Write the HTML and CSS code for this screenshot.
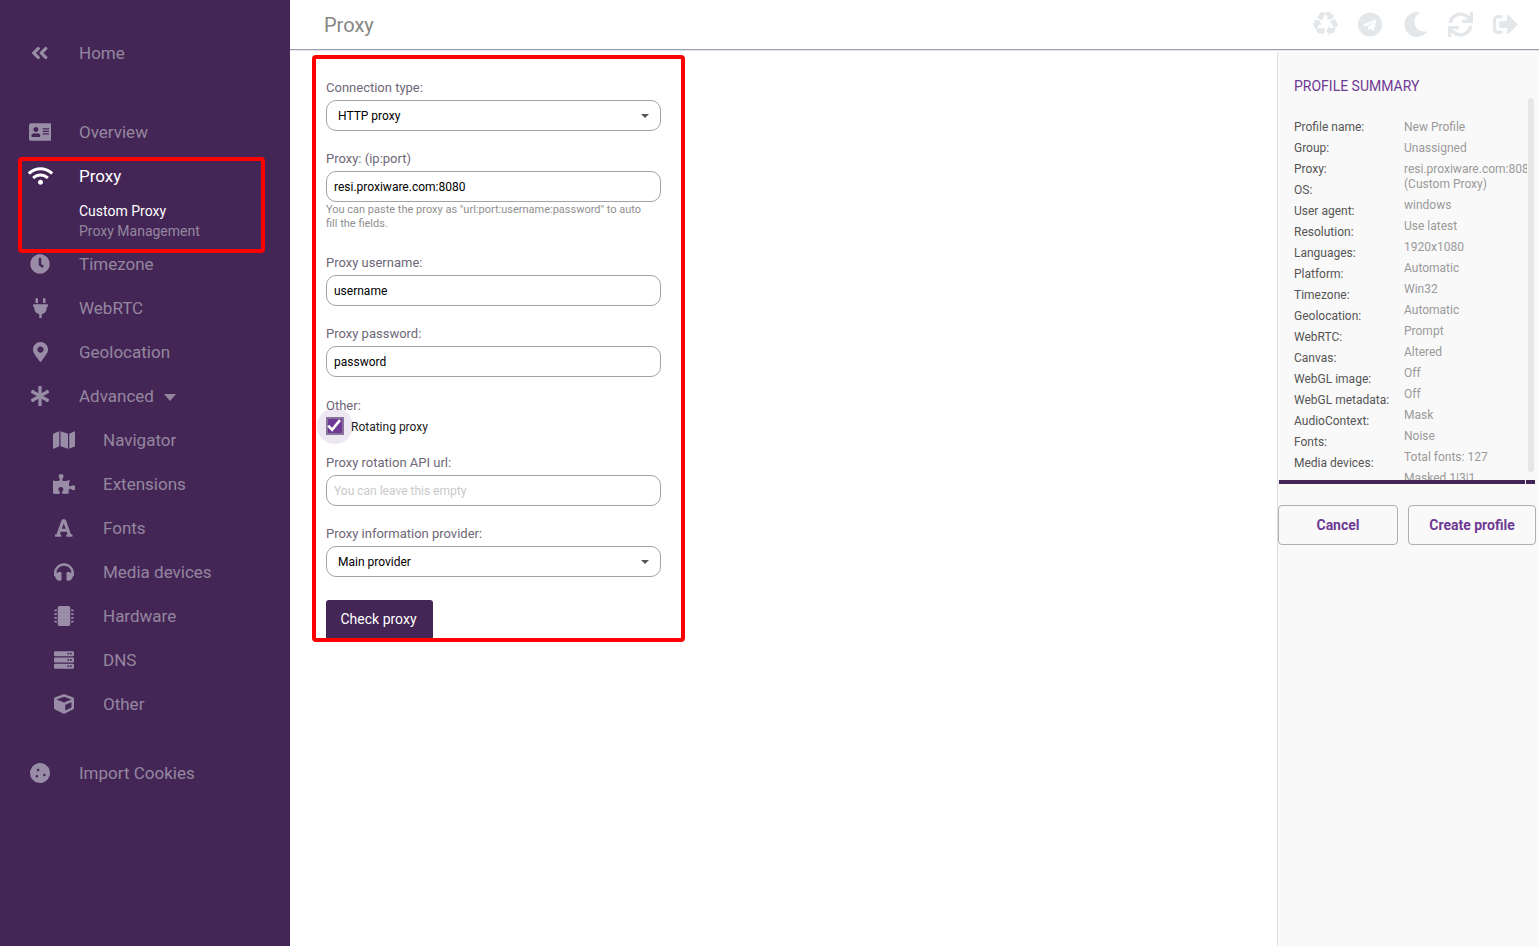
FILE: index.html
```html
<!DOCTYPE html>
<html lang="en">
<head>
<meta charset="utf-8">
<title>Proxy</title>
<link rel="stylesheet" href="styles.css">
</head>
<body>
<div class="app">
  <nav class="sidebar">
    <a class="nav-row home"><span class="ico"><svg class="i" viewBox="0 0 448 512"><path d="M223.7 239l136-136c9.4-9.4 24.6-9.4 33.9 0l22.6 22.6c9.4 9.4 9.4 24.6 0 33.9L319.9 256l96.4 96.4c9.4 9.4 9.4 24.6 0 33.9L393.7 409c-9.4 9.4-24.6 9.4-33.9 0l-136-136c-9.5-9.4-9.5-24.6-.1-34zm-192 34l136 136c9.4 9.4 24.6 9.4 33.9 0l22.6-22.6c9.4-9.4 9.4-24.6 0-33.9L127.9 256l96.4-96.4c9.4-9.4 9.4-24.6 0-33.9L201.7 103c-9.4-9.4-24.6-9.4-33.9 0l-136 136c-9.5 9.4-9.5 24.6-.1 34z"/></svg></span>Home</a>
    <a class="nav-row overview"><span class="ico"><svg class="i" viewBox="0 0 576 512"><path d="M528 32H48C21.5 32 0 53.5 0 80v352c0 26.5 21.5 48 48 48h480c26.5 0 48-21.5 48-48V80c0-26.5-21.5-48-48-48zm-352 96c35.3 0 64 28.7 64 64s-28.7 64-64 64-64-28.7-64-64 28.7-64 64-64zm112 236.8c0 10.6-10 19.2-22.4 19.2H86.4C74 384 64 375.4 64 364.8v-19.2c0-31.8 30.1-57.6 67.2-57.6h5c12.3 5.1 25.7 8 39.8 8s27.6-2.9 39.8-8h5c37.1 0 67.2 25.8 67.2 57.6v19.2zM512 312c0 4.4-3.6 8-8 8H360c-4.4 0-8-3.6-8-8v-16c0-4.4 3.6-8 8-8h144c4.4 0 8 3.6 8 8v16zm0-64c0 4.4-3.6 8-8 8H360c-4.4 0-8-3.6-8-8v-16c0-4.4 3.6-8 8-8h144c4.4 0 8 3.6 8 8v16zm0-64c0 4.4-3.6 8-8 8H360c-4.4 0-8-3.6-8-8v-16c0-4.4 3.6-8 8-8h144c4.4 0 8 3.6 8 8v16z"/></svg></span>Overview</a>
    <a class="nav-row active"><span class="ico"><svg class="i" viewBox="0 0 640 512"><path d="M634.91 154.88C457.74-8.99 182.19-8.93 5.09 154.88c-6.66 6.16-6.79 16.59-.35 22.98l34.24 33.97c6.14 6.1 16.02 6.23 22.4.38 145.92-133.68 371.3-133.71 517.25 0 6.38 5.85 16.26 5.71 22.4-.38l34.24-33.97c6.43-6.39 6.3-16.82-.36-22.98zM320 352c-35.35 0-64 28.65-64 64s28.65 64 64 64 64-28.65 64-64-28.65-64-64-64zm202.67-83.59c-115.26-101.93-290.21-101.82-405.34 0-6.9 6.1-7.12 16.69-.57 23.15l34.44 33.99c6 5.92 15.66 6.32 22.05.8 83.95-72.57 209.74-72.41 293.49 0 6.39 5.52 16.05 5.13 22.05-.8l34.44-33.99c6.56-6.46 6.33-17.06-.56-23.15z"/></svg></span>Proxy</a>
    <div class="sub-list">
      <a class="sub-item current">Custom Proxy</a>
      <a class="sub-item">Proxy Management</a>
    </div>
    <a class="nav-row"><span class="ico"><svg class="i" viewBox="0 0 512 512"><path d="M256,8C119,8,8,119,8,256S119,504,256,504,504,393,504,256,393,8,256,8Zm92.49,313h0l-20,25a16,16,0,0,1-22.49,2.5h0l-67-49.72a40,40,0,0,1-15-31.23V112a16,16,0,0,1,16-16h32a16,16,0,0,1,16,16V256l58,42.5A16,16,0,0,1,348.49,321Z"/></svg></span>Timezone</a>
    <a class="nav-row"><span class="ico"><svg class="i" viewBox="0 0 384 512"><path d="M320,32a32,32,0,0,0-64,0v96h64Zm48,128H16A16,16,0,0,0,0,176v32a16,16,0,0,0,16,16H32v32A160.07,160.07,0,0,0,160,412.8V512h64V412.8A160.07,160.07,0,0,0,352,256V224h16a16,16,0,0,0,16-16V176A16,16,0,0,0,368,160ZM128,32a32,32,0,0,0-64,0v96h64Z"/></svg></span>WebRTC</a>
    <a class="nav-row"><span class="ico"><svg class="i" viewBox="0 0 384 512"><path d="M172.268 501.67C26.97 291.031 0 269.413 0 192 0 85.961 85.961 0 192 0s192 85.961 192 192c0 77.413-26.97 99.031-172.268 309.67-9.535 13.774-29.93 13.773-39.464 0zM192 272c44.183 0 80-35.817 80-80s-35.817-80-80-80-80 35.817-80 80 35.817 80 80 80z"/></svg></span>Geolocation</a>
    <a class="nav-row"><span class="ico"><svg class="i" viewBox="0 0 512 512"><path d="M478.21 334.093L336 256l142.21-78.093c11.795-6.477 15.961-21.384 9.232-33.037l-19.48-33.741c-6.728-11.653-21.72-15.499-33.227-8.523L296 186.718l3.475-162.204C299.763 11.061 288.937 0 275.48 0h-38.96c-13.456 0-24.283 11.061-23.994 24.514L216 186.718 77.265 102.607c-11.506-6.976-26.499-3.13-33.227 8.523l-19.48 33.741c-6.728 11.653-2.562 26.56 9.233 33.037L176 256 33.79 334.093c-11.795 6.477-15.961 21.384-9.232 33.037l19.48 33.741c6.728 11.653 21.721 15.499 33.227 8.523L216 325.282l-3.475 162.204C212.237 500.939 223.064 512 236.52 512h38.961c13.456 0 24.283-11.061 23.995-24.514L296 325.282l138.735 84.111c11.506 6.976 26.499 3.13 33.227-8.523l19.48-33.741c6.728-11.653 2.563-26.559-9.232-33.036z"/></svg></span>Advanced<span class="caret"></span></a>
    <a class="nav-row child"><span class="ico"><svg class="i" viewBox="0 0 576 512"><path d="M0 117.66v346.32c0 11.32 11.43 19.06 21.94 14.86L160 416V32L20.12 87.95A32.006 32.006 0 0 0 0 117.66zM192 416l192 64V96L192 32v384zM554.06 33.16L416 96v384l139.88-55.95A31.996 31.996 0 0 0 576 394.34V48.02c0-11.32-11.43-19.06-21.94-14.86z"/></svg></span>Navigator</a>
    <a class="nav-row child"><span class="ico"><svg class="i" viewBox="0 0 576 512"><path d="M519.442 288.651c-41.519 0-59.5 31.593-82.058 31.593C377.409 320.244 432 144 432 144s-196.288 80-196.288-3.297c0-35.827 36.288-46.25 36.288-85.985C272 19.216 243.885 0 210.539 0c-34.654 0-66.366 18.891-66.366 56.346 0 41.364 31.711 59.277 31.711 81.75C175.885 207.719 0 166.758 0 166.758v333.237s178.635 41.047 178.635-28.662c0-22.473-40-40.107-40-81.471 0-37.456 29.25-56.346 63.577-56.346 33.673 0 61.788 19.216 61.788 54.717 0 39.735-36.288 50.158-36.288 85.985 0 60.803 129.675 25.73 181.23 25.73 0 0-34.725-120.101 25.827-120.101 35.962 0 46.423 36.152 86.308 36.152C556.712 416 576 387.99 576 354.443c0-34.199-18.962-65.792-56.558-65.792z"/></svg></span>Extensions</a>
    <a class="nav-row child"><span class="ico"><svg class="i" viewBox="0 0 448 512"><path d="M432 416h-23.41L277.88 53.69A32 32 0 0 0 247.58 32h-47.16a32 32 0 0 0-30.3 21.69L39.41 416H16a16 16 0 0 0-16 16v32a16 16 0 0 0 16 16h128a16 16 0 0 0 16-16v-32a16 16 0 0 0-16-16h-19.6l23.3-64h152.6l23.3 64H304a16 16 0 0 0-16 16v32a16 16 0 0 0 16 16h128a16 16 0 0 0 16-16v-32a16 16 0 0 0-16-16zM176.85 272L224 143.51 271.15 272z"/></svg></span>Fonts</a>
    <a class="nav-row child"><span class="ico"><svg class="i" viewBox="0 0 512 512"><path d="M256 32C114.52 32 0 146.496 0 288v48a32 32 0 0 0 17.689 28.622l14.383 7.191C34.083 431.903 83.421 480 144 480h24c13.255 0 24-10.745 24-24V280c0-13.255-10.745-24-24-24h-24c-31.342 0-59.671 12.879-80 33.627V288c0-105.869 86.131-192 192-192s192 86.131 192 192v1.627C427.671 268.879 399.342 256 368 256h-24c-13.255 0-24 10.745-24 24v176c0 13.255 10.745 24 24 24h24c60.579 0 109.917-48.098 111.928-108.187l14.382-7.191A32 32 0 0 0 512 336v-48c0-141.504-114.52-256-256-256z"/></svg></span>Media devices</a>
    <a class="nav-row child"><span class="ico"><svg class="i" viewBox="0 0 512 512"><path d="M416 48v416c0 26.51-21.49 48-48 48H144c-26.51 0-48-21.49-48-48V48c0-26.51 21.49-48 48-48h224c26.51 0 48 21.49 48 48zm96 58v12a6 6 0 0 1-6 6h-18v6a6 6 0 0 1-6 6h-42V88h42a6 6 0 0 1 6 6v6h18a6 6 0 0 1 6 6zm0 96v12a6 6 0 0 1-6 6h-18v6a6 6 0 0 1-6 6h-42v-48h42a6 6 0 0 1 6 6v6h18a6 6 0 0 1 6 6zm0 96v12a6 6 0 0 1-6 6h-18v6a6 6 0 0 1-6 6h-42v-48h42a6 6 0 0 1 6 6v6h18a6 6 0 0 1 6 6zm0 96v12a6 6 0 0 1-6 6h-18v6a6 6 0 0 1-6 6h-42v-48h42a6 6 0 0 1 6 6v6h18a6 6 0 0 1 6 6zM30 376h42v48H30a6 6 0 0 1-6-6v-6H6a6 6 0 0 1-6-6v-12a6 6 0 0 1 6-6h18v-6a6 6 0 0 1 6-6zm0-96h42v48H30a6 6 0 0 1-6-6v-6H6a6 6 0 0 1-6-6v-12a6 6 0 0 1 6-6h18v-6a6 6 0 0 1 6-6zm0-96h42v48H30a6 6 0 0 1-6-6v-6H6a6 6 0 0 1-6-6v-12a6 6 0 0 1 6-6h18v-6a6 6 0 0 1 6-6zm0-96h42v48H30a6 6 0 0 1-6-6v-6H6a6 6 0 0 1-6-6v-12a6 6 0 0 1 6-6h18v-6a6 6 0 0 1 6-6z"/></svg></span>Hardware</a>
    <a class="nav-row child"><span class="ico"><svg class="i" viewBox="0 0 512 512"><path d="M480 160H32c-17.673 0-32-14.327-32-32V64c0-17.673 14.327-32 32-32h448c17.673 0 32 14.327 32 32v64c0 17.673-14.327 32-32 32zm-48-88c-13.255 0-24 10.745-24 24s10.745 24 24 24 24-10.745 24-24-10.745-24-24-24zm-64 0c-13.255 0-24 10.745-24 24s10.745 24 24 24 24-10.745 24-24-10.745-24-24-24zm112 248H32c-17.673 0-32-14.327-32-32v-64c0-17.673 14.327-32 32-32h448c17.673 0 32 14.327 32 32v64c0 17.673-14.327 32-32 32zm-48-88c-13.255 0-24 10.745-24 24s10.745 24 24 24 24-10.745 24-24-10.745-24-24-24zm-64 0c-13.255 0-24 10.745-24 24s10.745 24 24 24 24-10.745 24-24-10.745-24-24-24zm112 248H32c-17.673 0-32-14.327-32-32v-64c0-17.673 14.327-32 32-32h448c17.673 0 32 14.327 32 32v64c0 17.673-14.327 32-32 32zm-48-88c-13.255 0-24 10.745-24 24s10.745 24 24 24 24-10.745 24-24-10.745-24-24-24zm-64 0c-13.255 0-24 10.745-24 24s10.745 24 24 24 24-10.745 24-24-10.745-24-24-24z"/></svg></span>DNS</a>
    <a class="nav-row child"><span class="ico"><svg class="i" viewBox="0 0 512 512"><path d="M239.1 6.3l-208 78c-18.7 7-31.1 25-31.1 45v225.1c0 18.2 10.3 34.8 26.5 42.9l208 104c13.5 6.8 29.4 6.8 42.9 0l208-104c16.3-8.1 26.5-24.8 26.5-42.9V129.3c0-20-12.4-37.9-31.1-44.9l-208-78C262 2.2 250 2.2 239.1 6.3zM256 68.4l192 72v1.1l-192 78-192-78v-1.1l192-72zm32 356V275.5l160-65v133.9l-160 80z"/></svg></span>Other</a>
    <a class="nav-row cookies"><span class="ico"><svg class="i" viewBox="0 0 512 512"><path d="M510.37 254.79l-12.08-76.26a132.493 132.493 0 0 0-37.16-72.95l-54.76-54.75c-19.73-19.72-45.18-32.7-72.71-37.05l-76.7-12.15c-27.51-4.36-55.69.11-80.52 12.76L107.32 49.6a132.25 132.25 0 0 0-57.79 57.8l-35.1 68.88a132.602 132.602 0 0 0-12.82 80.94l12.08 76.27a132.493 132.493 0 0 0 37.16 72.95l54.76 54.75a132.087 132.087 0 0 0 72.71 37.05l76.7 12.14c27.51 4.36 55.69-.11 80.52-12.75l69.12-35.21a132.302 132.302 0 0 0 57.79-57.8l35.1-68.87c12.71-24.96 17.2-53.3 12.82-80.96zM176 368c-17.67 0-32-14.33-32-32s14.33-32 32-32 32 14.33 32 32-14.33 32-32 32zm32-160c-17.67 0-32-14.33-32-32s14.33-32 32-32 32 14.33 32 32-14.33 32-32 32zm160 128c-17.67 0-32-14.33-32-32s14.33-32 32-32 32 14.33 32 32-14.33 32-32 32z"/></svg></span>Import Cookies</a>
  </nav>

  <div class="page">
    <header class="topbar">
      <h1 class="title">Proxy</h1>
      <div class="top-icons">
        <span class="top-ico"><svg viewBox="0 0 1792 1792"><path d="M836 1169l-15 368-2 22-420-29q-36-3-67-31.5t-47-65.5q-11-27-14.5-55t4-65 12-55 21.5-64 19-53q78 12 509 28zm-387-586l180 379-147-92q-63 72-111.5 144.5t-72.5 125-39.5 94.5-18.5 63l-4 21-190-357q-17-26-18-56t6-47l8-18q35-63 114-188l-140-86zm1231 517l-188 359q-12 29-36.5 46.5t-43.5 20.5l-18 4q-71 7-219 12l8 164-230-367 211-362 7 173q170 16 283 5t170-33zm-785-924q-47 63-265 435l-317-187-19-12 225-356q20-31 60-45t80-10q24 2 48.5 12t42 21 41.5 33 36 34.5 36 39.5 32 35zm655 307l212 363q18 37 12.5 76t-27.5 74q-13 20-33 37t-38 28-48.5 22-47 16-51.5 14-46 12q-34-72-265-436l313-195zm-143-226l142-83-220 373-419-20 151-86q-34-89-75-166t-75.5-123.5-64.5-80-47-46.5l-17-13 405 1q31-3 58 10.5t39 28.5l11 15q39 61 112 190z"/></svg></span>
        <span class="top-ico"><svg viewBox="0 0 496 512"><path d="M248 8C111 8 0 119 0 256s111 248 248 248 248-111 248-248S385 8 248 8zm121.8 169.9l-40.7 191.8c-3 13.6-11.1 16.9-22.4 10.5l-62-45.7-29.9 28.8c-3.3 3.3-6.1 6.1-12.5 6.1l4.4-63.1 114.9-103.8c5-4.4-1.1-6.9-7.7-2.5l-142 89.4-61.2-19.1c-13.3-4.2-13.6-13.3 2.8-19.7l239.1-92.2c11.1-4 20.8 2.7 17.2 19.5z"/></svg></span>
        <span class="top-ico"><svg viewBox="0 0 512 512"><path d="M283.211 512c78.962 0 151.079-35.925 198.857-94.792 7.068-8.708-.639-21.43-11.562-19.35-124.203 23.654-238.262-71.576-238.262-196.954 0-72.222 38.662-138.635 101.498-174.394 9.686-5.512 7.25-20.197-3.756-22.23A258.156 258.156 0 0 0 283.211 0c-141.309 0-256 114.511-256 256 0 141.309 114.511 256 256 256z"/></svg></span>
        <span class="top-ico"><svg viewBox="0 0 512 512"><path d="M440.65 12.57l4 82.77A247.16 247.16 0 0 0 255.83 8C134.73 8 33.91 94.92 12.29 209.82A12 12 0 0 0 24.09 224h49.05a12 12 0 0 0 11.67-9.26 175.91 175.91 0 0 1 317-56.94l-101.46-4.86a12 12 0 0 0-12.57 12v47.41a12 12 0 0 0 12 12H500a12 12 0 0 0 12-12V12a12 12 0 0 0-12-12h-47.37a12 12 0 0 0-11.98 12.57zM255.83 432a175.61 175.61 0 0 1-146-77.8l101.8 4.87a12 12 0 0 0 12.57-12v-47.4a12 12 0 0 0-12-12H12a12 12 0 0 0-12 12V500a12 12 0 0 0 12 12h47.35a12 12 0 0 0 12-12.6l-4.15-82.57A247.17 247.17 0 0 0 255.83 504c121.11 0 221.93-86.92 243.55-201.82a12 12 0 0 0-11.8-14.18h-49.05a12 12 0 0 0-11.67 9.26A175.86 175.86 0 0 1 255.83 432z"/></svg></span>
        <span class="top-ico"><svg viewBox="0 0 512 512"><path d="M497 273L329 441c-15 15-41 4.5-41-17v-96H152c-13.3 0-24-10.7-24-24v-96c0-13.3 10.7-24 24-24h136V88c0-21.4 25.9-32 41-17l168 168c9.3 9.4 9.3 24.6 0 34zM192 436v-40c0-6.6-5.4-12-12-12H96c-17.7 0-32-14.3-32-32V160c0-17.7 14.3-32 32-32h84c6.6 0 12-5.4 12-12V76c0-6.6-5.4-12-12-12H96c-53 0-96 43-96 96v192c0 53 43 96 96 96h84c6.6 0 12-5.4 12-12z"/></svg></span>
      </div>
    </header>

    <div class="body-row">
      <main class="content">
        <form class="proxy-form">
          <div class="field">
            <label class="lbl">Connection type:</label>
            <div class="select-wrap"><select class="ctl sel"><option>HTTP proxy</option></select></div>
          </div>
          <div class="field">
            <label class="lbl">Proxy: (ip:port)</label>
            <input class="ctl txt" type="text" value="resi.proxiware.com:8080">
            <p class="hint">You can paste the proxy as "url:port:username:password" to auto<br>fill the fields.</p>
          </div>
          <div class="field">
            <label class="lbl">Proxy username:</label>
            <input class="ctl txt" type="text" value="username">
          </div>
          <div class="field">
            <label class="lbl">Proxy password:</label>
            <input class="ctl txt" type="text" value="password">
          </div>
          <div class="field other">
            <label class="lbl tight">Other:</label>
            <label class="check-row"><span class="check"><svg viewBox="0 0 18 18"><path d="M2.2 8.6l3.9 4.2 7.9-9.6"/></svg></span><span class="check-text">Rotating proxy</span></label>
          </div>
          <div class="field">
            <label class="lbl">Proxy rotation API url:</label>
            <input class="ctl txt" type="text" placeholder="You can leave this empty">
          </div>
          <div class="field">
            <label class="lbl">Proxy information provider:</label>
            <div class="select-wrap"><select class="ctl sel"><option>Main provider</option></select></div>
          </div>
          <button class="check-btn" type="button">Check proxy</button>
        </form>
      </main>

      <aside class="summary">
        <h2 class="sum-title">PROFILE SUMMARY</h2>
        <div class="sum-scroll">
          <div class="sum-grid">
            <div class="sum-col keys">
              <div>Profile name:</div><div>Group:</div><div>Proxy:</div><div>OS:</div><div>User agent:</div><div>Resolution:</div><div>Languages:</div><div>Platform:</div><div>Timezone:</div><div>Geolocation:</div><div>WebRTC:</div><div>Canvas:</div><div>WebGL image:</div><div>WebGL metadata:</div><div>AudioContext:</div><div>Fonts:</div><div>Media devices:</div>
            </div>
            <div class="sum-col vals">
              <div>New Profile</div><div>Unassigned</div><div class="two">resi.proxiware.com:8080<br>(Custom Proxy)</div><div>windows</div><div>Use latest</div><div>1920x1080</div><div>Automatic</div><div>Win32</div><div>Automatic</div><div>Prompt</div><div>Altered</div><div>Off</div><div>Off</div><div>Mask</div><div>Noise</div><div>Total fonts: 127</div><div>Masked 1|3|1</div>
            </div>
          </div>
        </div>
        <div class="sum-rule"><span class="rule-a"></span><span class="rule-b"></span></div>
        <div class="sum-actions">
          <button class="ghost cancel" type="button">Cancel</button>
          <button class="ghost create" type="button">Create profile</button>
        </div>
      </aside>
    </div>
  </div>
</div>
<div class="mark mark-nav"></div>
<div class="mark mark-form"></div>
</body>
</html>
```

FILE: styles.css
```css
* { box-sizing: border-box; }
html, body { margin: 0; height: 100%; }
body { font-family: Roboto, "Liberation Sans", sans-serif; background: #fff; overflow: hidden; position: relative; }
.app { display: flex; height: 946px; }

.sidebar { width: 290px; flex: none; background: #442656; padding-top: 31px; display: flex; flex-direction: column; }
.nav-row { display: flex; align-items: center; height: 44px; padding-left: 20px; font-size: 17px; line-height: 44px; color: #94869f; flex: none; }
.ico { width: 40px; margin-right: 19px; display: flex; justify-content: center; flex: none; }
.i { height: 20px; display: block; fill: #988ca6; }
.overview { margin-top: 35px; }
.active { color: #fff; }
.active .i { fill: #fff; }
.child { padding-left: 44px; }
.cookies { margin-top: 25px; }
.caret { width: 0; height: 0; margin-left: 10px; margin-top: 2px; border-left: 6.5px solid transparent; border-right: 6.5px solid transparent; border-top: 7px solid #94869f; }
.sub-list { height: 44px; padding: 3px 0 0 79px; }
.sub-item { display: block; height: 20px; line-height: 20px; font-size: 14px; color: #94869f; }
.current { color: #fff; }

.page { flex: 1; min-width: 0; display: flex; flex-direction: column; }
.topbar { height: 50px; flex: none; border-bottom: 1px solid #a09cac; box-shadow: 0 1px 0 #e4e2ea; display: flex; align-items: center; justify-content: space-between; padding-left: 34px; padding-right: 11px; }
.title { margin: 0; font-size: 20px; font-weight: 400; color: #868686; }
.top-icons { display: flex; }
.top-ico { width: 45px; display: flex; justify-content: center; }
.top-ico svg { height: 25px; display: block; fill: #e4e7ea; }

.body-row { flex: 1; display: flex; min-height: 0; }
.content { flex: 1; min-width: 0; padding: 29px 0 0 36px; }
.proxy-form { width: 335px; display: flex; flex-direction: column; }
.field { margin-bottom: 19px; }
.lbl { display: block; height: 18px; line-height: 18px; margin-bottom: 3px; font-size: 13px; color: #6e6777; }
.other { margin-top: 1px; }
.tight { margin-bottom: 2px; }
.ctl { display: block; width: 100%; height: 31px; border: 1px solid #a3a3a3; border-radius: 10px; background: #fff; color: #000; font-family: inherit; font-size: 12px; outline: 0; }
.txt { padding: 0 7px; }
.txt::placeholder { color: #c9c9c9; opacity: 1; }
.select-wrap { position: relative; }
.sel { appearance: none; -webkit-appearance: none; padding: 0 11px; }
.select-wrap::after { content: ""; position: absolute; right: 12px; top: 14px; border-left: 4px solid transparent; border-right: 4px solid transparent; border-top: 4px solid #555; }
.hint { margin: 1px 0 4px; font-size: 11px; line-height: 14px; color: #8f8f8f; }
.check-row { display: flex; align-items: center; height: 18px; font-size: 12px; color: #222; }
.check-text { margin-top: 2px; }
.check { width: 18px; height: 18px; margin-right: 7px; background: #6f3a95; border: 2px solid #8b7b9b; display: block; position: relative; }
.check::before { content: ""; position: absolute; left: -11px; top: -11px; width: 36px; height: 36px; border-radius: 50%; background: rgba(111,58,149,.12); }
.check svg { position: absolute; left: -2px; top: -2px; width: 18px; height: 18px; fill: none; stroke: #fff; stroke-width: 2.6; }
.check-btn { width: 107px; height: 40px; margin-top: 4px; border: 0; border-radius: 3px; background: #442656; color: #fff; font-family: inherit; font-size: 14px; padding: 0 2px 2px 0; }

.summary { width: 262px; flex: none; margin-top: 2px; background: #f9f9f9; border-left: 1px solid #e0e0e0; position: relative; }
.sum-title { margin: 0; padding: 25px 0 0 16px; height: 46px; font-size: 14px; line-height: 18px; font-weight: 400; color: #6f3a95; }
.sum-scroll { height: 382px; overflow: hidden; padding-left: 16px; width: 249px; }
.sum-grid { display: flex; padding-top: 19px; font-size: 12px; line-height: 21px; }
.sum-col div { height: 21px; white-space: nowrap; }
.keys { width: 110px; flex: none; color: #555; }
.vals { color: #9a9a9a; }
.vals .two { height: 36px; line-height: 15px; padding-top: 3px; }
.summary::after { content: ""; position: absolute; left: 250px; top: 46px; width: 6px; height: 374px; background: #e6e6e6; border-radius: 3px; }
.sum-rule { display: flex; height: 4px; padding-left: 1px; gap: 1px; }
.rule-a { width: 246px; background: #442656; }
.rule-b { width: 9px; background: #442656; }
.sum-actions { display: flex; gap: 10px; margin-top: 21px; }
.ghost { height: 40px; border: 1px solid #b0adb5; border-radius: 4px; background: #f9f9f9; color: #6f3a95; font-family: inherit; font-size: 14px; font-weight: 700; padding: 0; }
.cancel { width: 120px; }
.create { width: 128px; }

.mark { position: absolute; border: 4px solid #f00; border-radius: 4px; pointer-events: none; }
.mark-nav { left: 18px; top: 157px; width: 247px; height: 96px; }
.mark-form { left: 312px; top: 55px; width: 373px; height: 587px; }
```
